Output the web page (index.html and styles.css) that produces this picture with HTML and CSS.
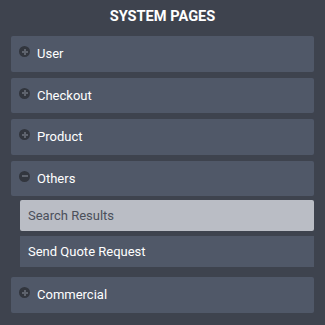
FILE: index.html
```html
<!DOCTYPE html>
<html lang="en">
<head>
  <meta charset="UTF-8">
  <meta name="viewport" content="width=device-width, initial-scale=1.0">
  <title>System Pages</title>
  <link rel="stylesheet" href="styles.css">
</head>
<body>
  <div class="panel">
    <h3 class="title">SYSTEM PAGES</h3>

    <div class="group">
      <div class="group-head"><span class="toggle plus"></span>User</div>
    </div>
    <div class="group">
      <div class="group-head"><span class="toggle plus"></span>Checkout</div>
    </div>
    <div class="group">
      <div class="group-head"><span class="toggle plus"></span>Product</div>
    </div>
    <div class="group open">
      <div class="group-head"><span class="toggle minus"></span>Others</div>
      <div class="sub-list">
        <a href="#" class="sub-item active">Search Results</a>
        <a href="#" class="sub-item">Send Quote Request</a>
      </div>
    </div>
    <div class="group">
      <div class="group-head"><span class="toggle plus"></span>Commercial</div>
    </div>
  </div>
</body>
</html>
```

FILE: styles.css
```css
body {
  margin: 0;
  padding: 0;
  background-color: #3e434e;
  font-family: Roboto, "Liberation Sans", sans-serif;
  color: #fff;
}
.panel {
  padding: 0 11px 0 11px;
}
.title {
  margin: 0;
  height: 36px;
  line-height: 33px;
  text-align: center;
  font-size: 14.6px;
  font-weight: bold;
}
.group {
  margin-bottom: 6px;
}
.group-head {
  position: relative;
  height: 35.5px;
  line-height: 36px;
  padding-left: 26px;
  background-color: #505868;
  border-radius: 2px;
  font-size: 13px;
}
.toggle {
  position: absolute;
  left: 8px;
  top: 10px;
  width: 11px;
  height: 11px;
  border-radius: 50%;
  background-color: #32363e;
}
.toggle::before,
.toggle::after {
  content: "";
  position: absolute;
  background-color: #5e636d;
}
.toggle::before {
  left: 2.5px;
  top: 4.5px;
  width: 6px;
  height: 2px;
}
.plus::after {
  left: 4.5px;
  top: 2.5px;
  width: 2px;
  height: 6px;
}
.sub-list {
  padding: 4px 0 4px 9px;
}
.sub-item {
  display: block;
  height: 31px;
  line-height: 31px;
  padding-left: 8px;
  margin-bottom: 5px;
  background-color: #505868;
  color: #fff;
  text-decoration: none;
  font-size: 13px;
}
.sub-item:last-child {
  margin-bottom: 0;
}
.sub-item.active {
  background-color: #babdc5;
  color: #4b505b;
  border-radius: 2px;
}
```
